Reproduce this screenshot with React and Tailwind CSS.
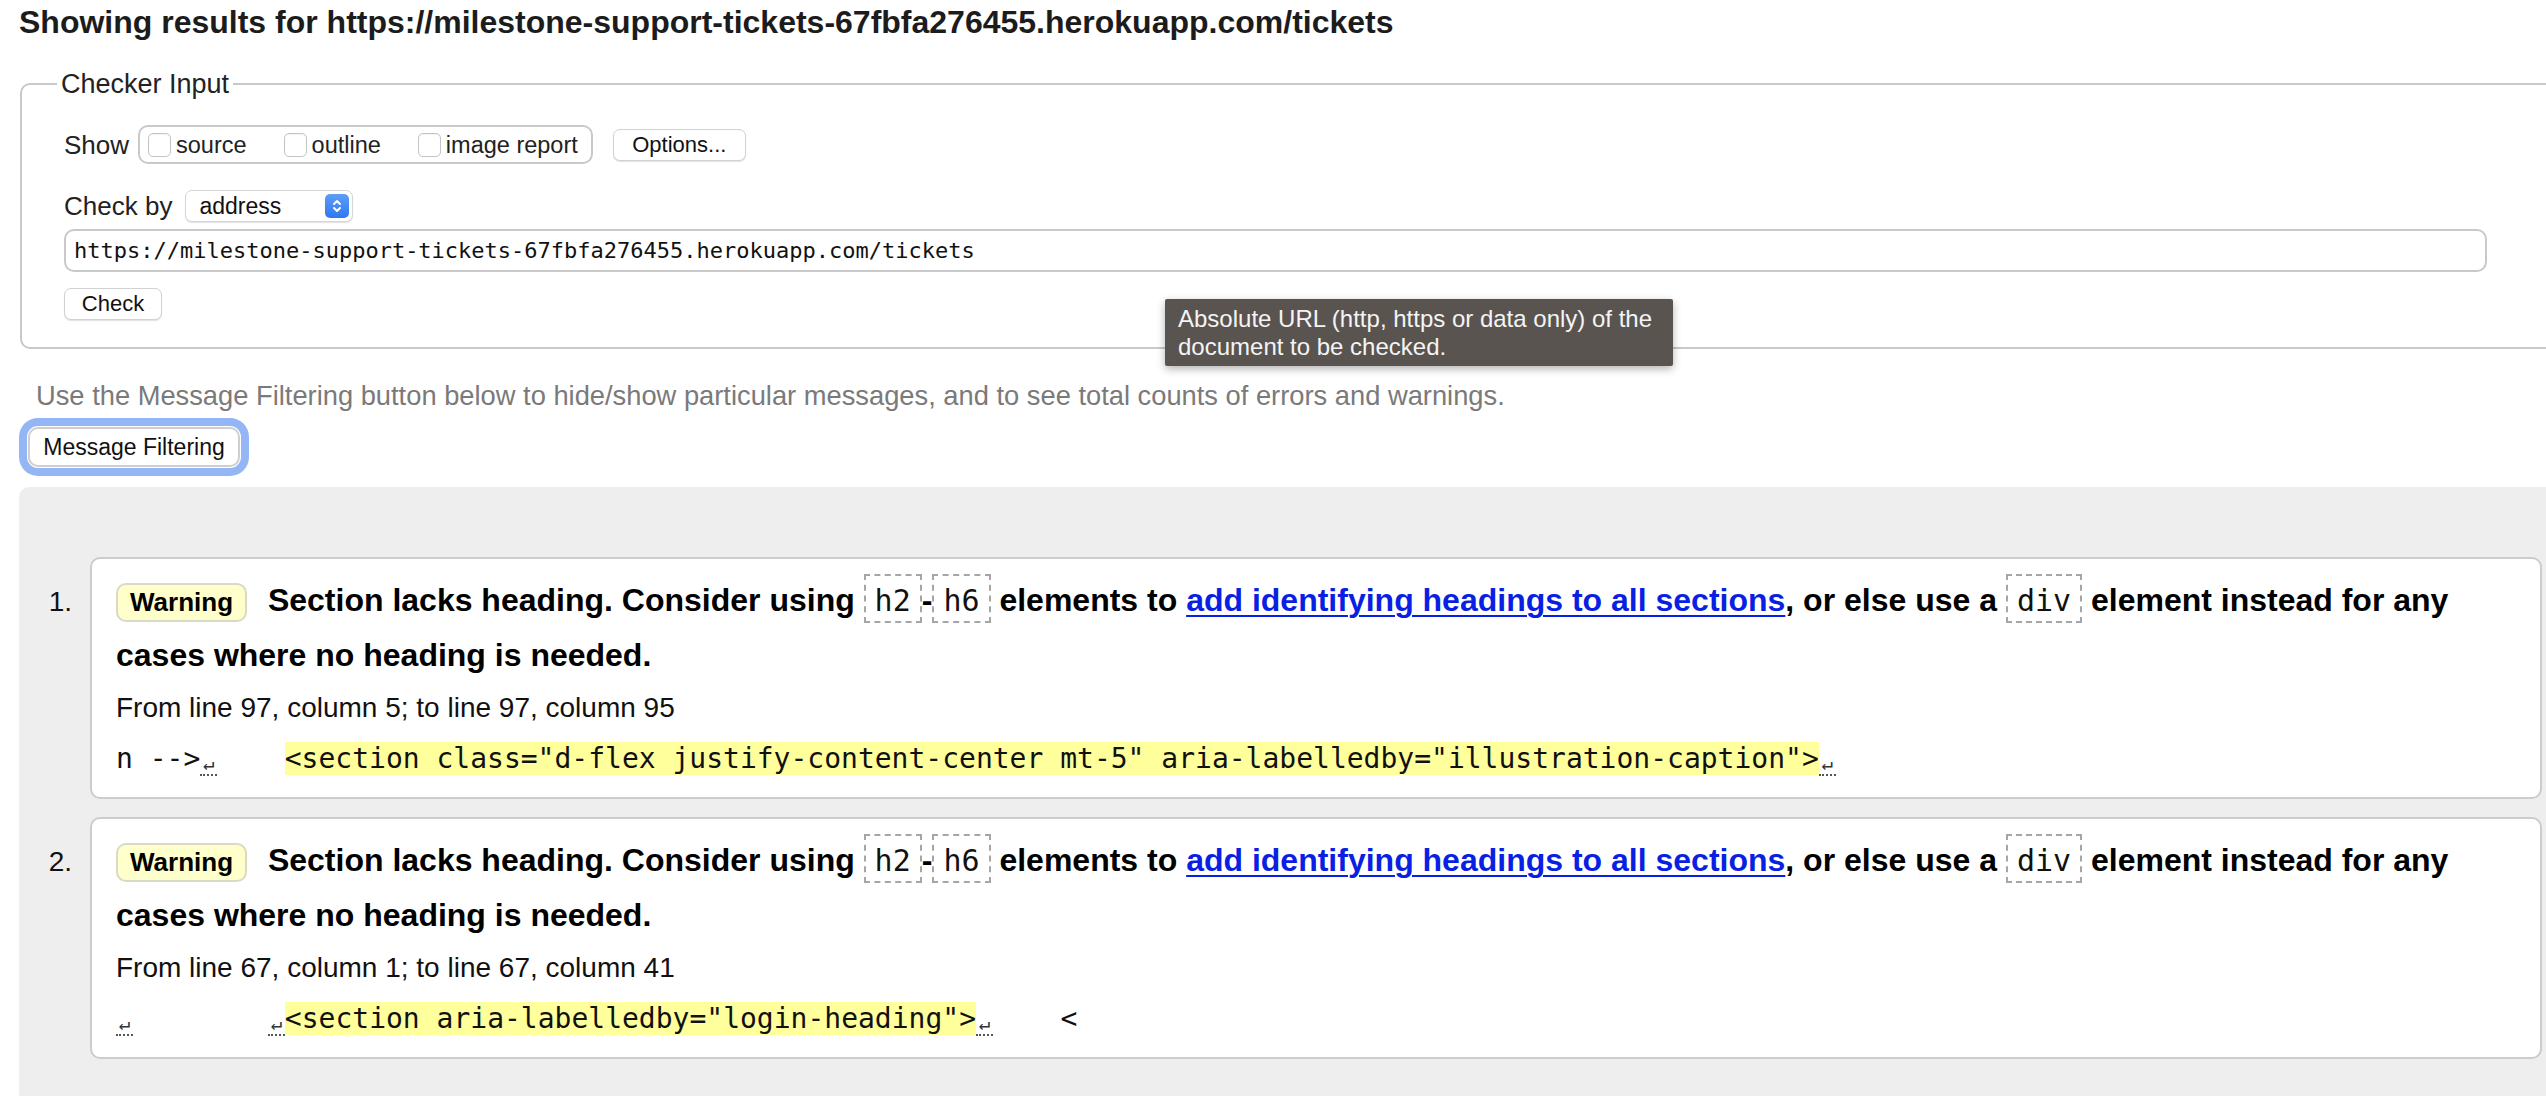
const SANS = "font-['Liberation_Sans',Arial,sans-serif]";
const MONO = "font-['DejaVu_Sans_Mono',monospace]";

const Check = ({ label }) => (
  <label className="flex items-center gap-[5px]">
    <span className="inline-block w-[23px] h-[24px] rounded-[5px] border border-[#c4c4c4] bg-white shadow-[inset_0_1px_1px_rgba(0,0,0,0.05)]" />
    <span className="text-[23.5px] leading-[28px] text-[#222]">{label}</span>
  </label>
);

const Code = ({ children }) => (
  <code
    className={`${MONO} text-[30px] font-normal text-[#111] border-2 border-dashed border-[#a6a6a6] px-[9px] pt-[7px] pb-[3px]`}
  >
    {children}
  </code>
);

// line feed marker shown in source extracts
const Lf = () => (
  <span className="inline-block w-[17px] text-center text-[19px] text-[#333] border-b-2 border-dotted border-[#555] leading-[22px] align-[-2px]">
    ↵
  </span>
);

const Message = ({ num, from, extract }) => (
  <div className="flex">
    <div className="w-[71px] shrink-0 text-right pr-[18px] pt-[29px] text-[28px] leading-[32px] text-[#111]">
      {num}.
    </div>
    <div className="w-[2452px] shrink-0 bg-white border-2 border-[#cccccc] rounded-[10px] pl-[24px] pr-[24px] pt-[14px] pb-[18px]">
      <p className="text-[32px] leading-[55px] font-bold text-black">
        <span className="inline-block bg-[#ffffcc] border-2 border-[#d9d9c4] rounded-[10px] px-[12px] py-[2px] mr-[12px] text-[26px] leading-[31px] font-bold">
          Warning
        </span>{" "}
        Section lacks heading. Consider using <Code>h2</Code>-<Code>h6</Code>{" "}
        elements to{" "}
        <a href="#" className="text-[#0a1fe4] underline decoration-2 underline-offset-[4px]">
          add identifying headings to all sections
        </a>
        , or else use a <Code>div</Code> element instead for any cases where no
        heading is needed.
      </p>
      <p className="mt-[8px] text-[28px] leading-[34px] text-[#111]">{from}</p>
      <p className={`${MONO} mt-[14px] text-[28px] leading-[40px] text-[#111] whitespace-pre`}>
        {extract}
      </p>
    </div>
  </div>
);

export default function App() {
  return (
    <div className={`${SANS} relative w-[2546px] h-[1096px] overflow-hidden bg-white text-[#222]`}>
      <h2 className="pl-[19px] pt-[4px] text-[32px] leading-[36px] font-bold text-[#1c1c1c]">
        Showing results for https://milestone-support-tickets-67fbfa276455.herokuapp.com/tickets
      </h2>

      <fieldset className="ml-[20px] mt-[29px] w-[2620px] border-2 border-[#c9c9c9] rounded-[10px] pl-[42px] pt-[26px] pb-[27px]">
        <legend className="-ml-[7px] px-[4px] text-[27px] leading-[30px] text-[#222]">
          Checker Input
        </legend>

        <div className="flex items-center h-[39px]">
          <span className="text-[26px] leading-[30px] mr-[9px]">Show</span>
          <div className="flex items-center h-[39px] border-2 border-[#c9c9c9] rounded-[10px] pl-[8px] pr-[13px] gap-[37px]">
            <Check label="source" />
            <Check label="outline" />
            <Check label="image report" />
          </div>
          <button className="ml-[20px] w-[133px] h-[32px] bg-white border border-[#d2d2d2] rounded-[7px] shadow-[0_1px_1px_rgba(0,0,0,0.12)] text-[22px] leading-[26px] text-[#111]">
            Options...
          </button>
        </div>

        <div className="flex items-center mt-[26px] h-[32px]">
          <span className="text-[26px] leading-[30px] mr-[13px]">Check by</span>
          <div className="flex items-center justify-between w-[168px] h-[32px] bg-white border border-[#d6d6d6] rounded-[7px] shadow-[0_1px_1px_rgba(0,0,0,0.12)] pl-[13px] pr-[3px]">
            <span className="text-[23px] leading-[26px] text-[#111]">address</span>
            <span className="flex items-center justify-center w-[24px] h-[24px] rounded-[5px] bg-gradient-to-b from-[#5c9ef9] to-[#2f78ef]">
              <svg width="12" height="18" viewBox="0 0 12 18" fill="none" stroke="white" strokeWidth="2" strokeLinecap="round" strokeLinejoin="round">
                <path d="M3 7 6 4 9 7" />
                <path d="M3 11 6 14 9 11" />
              </svg>
            </span>
          </div>
        </div>

        <div
          className={`${MONO} mt-[7px] w-[2423px] h-[43px] flex items-center border-2 border-[#c9c9c9] rounded-[10px] pl-[8px] text-[22px] text-[#111]`}
        >
          https://milestone-support-tickets-67fbfa276455.herokuapp.com/tickets
        </div>

        <button className="mt-[16px] w-[98px] h-[32px] bg-white border border-[#d2d2d2] rounded-[7px] shadow-[0_1px_1px_rgba(0,0,0,0.12)] text-[22px] leading-[26px] text-[#111]">
          Check
        </button>
      </fieldset>

      <p className="ml-[36px] mt-[31px] text-[27.3px] leading-[31px] text-[#7a7a7a]">
        Use the Message Filtering button below to hide/show particular messages, and to see total counts of errors and warnings.
      </p>

      <button className="ml-[28px] mt-[16px] w-[212px] h-[40px] bg-white border-2 border-[#cfcfcf] rounded-[10px] shadow-[0_0_0_1px_#ffffff,0_0_0_9px_#94b6f5] text-[23px] leading-[28px] text-[#111]">
        Message Filtering
      </button>

      <div className="ml-[19px] mt-[20px] h-[700px] bg-[#eeeeee] rounded-tl-[10px] pt-[70px] flex flex-col gap-[18px]">
        <Message
          num={1}
          from="From line 97, column 5; to line 97, column 95"
          extract={
            <>
              n --&gt;<Lf />{"    "}
              <span className="bg-[#ffff9c]">
                &lt;section class="d-flex justify-content-center mt-5" aria-labelledby="illustration-caption"&gt;
              </span>
              <Lf />
            </>
          }
        />
        <Message
          num={2}
          from="From line 67, column 1; to line 67, column 41"
          extract={
            <>
              <Lf />
              {"        "}
              <Lf />
              <span className="bg-[#ffff9c]">&lt;section aria-labelledby="login-heading"&gt;</span>
              <Lf />
              {"    "}&lt;
            </>
          }
        />
      </div>

      {/* tooltip over the address field */}
      <div className="absolute left-[1165px] top-[299px] w-[508px] h-[67px] bg-[#5a5450] rounded-[2px] shadow-[0_3px_8px_rgba(0,0,0,0.3)] px-[13px] pt-[6px] text-[24px] leading-[28px] text-[#f4f4f4]">
        Absolute URL (http, https or data only) of the document to be checked.
      </div>
    </div>
  );
}
